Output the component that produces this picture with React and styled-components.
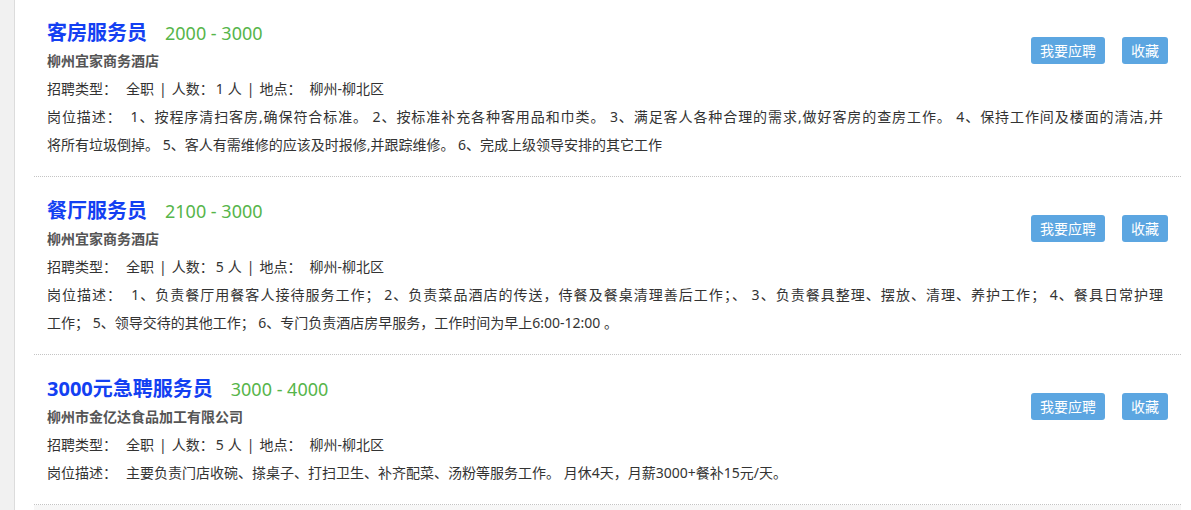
import React from "react";
import styled, { createGlobalStyle } from "styled-components";

const GlobalStyle = createGlobalStyle`
  body {
    margin: 0;
    background: #fff;
    font-family: "Noto Sans", "Noto Sans CJK SC", sans-serif;
    color: #333;
  }
`;

const Page = styled.div`
  display: flex;
  height: 510px;
  overflow: hidden;
`;

const Side = styled.div`
  width: 14px;
  flex-shrink: 0;
  background: #f1f1f1;
  border-right: 1px solid #dcdcdc;
`;

const Main = styled.div`
  flex: 1;
  padding: 0 10px 0 19px;
  margin-top: -1px;
`;

const Item = styled.div`
  padding: 20px 13px 17px;
  border-bottom: 1px dotted #c4c4c4;
`;

const Head = styled.div`
  display: flex;
  justify-content: space-between;
  align-items: flex-start;
`;

const Info = styled.div`
  line-height: 28px;
  font-size: 14px;
`;

const TitleRow = styled.div`
  display: flex;
  align-items: baseline;
`;

const Title = styled.a`
  font-size: 20px;
  font-weight: bold;
  color: #1340f2;
  text-decoration: none;
`;

const Salary = styled.span`
  font-size: 18px;
  color: #56b54a;
  margin-left: 18px;
`;

const Company = styled.div`
  font-weight: bold;
  color: #555;
`;

const Label = styled.span`
  margin-right: 9px;
`;

const Sep = styled.span`
  margin: 0 5px;
`;

const Count = styled.span`
  margin: 0 4px 0 2px;
`;

const Place = styled.span`
  margin-left: 8px;
`;

const Actions = styled.div`
  display: flex;
  gap: 17px;
  margin-top: 18px;
`;

const Button = styled.button`
  height: 27px;
  padding: 0 9px;
  border: none;
  border-radius: 3px;
  background: #5ca6e1;
  color: #fff;
  font-family: inherit;
  font-size: 14px;
  line-height: 27px;
  cursor: pointer;
`;

const Desc = styled.div`
  font-size: 14px;
  line-height: 28px;
  padding-right: 5px;
`;

const Line = styled.span`
  display: block;
  white-space: nowrap;
  text-align: ${(p) => (p.$full ? "justify" : "left")};
  text-align-last: ${(p) => (p.$full ? "justify" : "auto")};
`;

const Footer = styled.div`
  height: 40px;
  background: #f7f7f7;
`;

const jobs = [
  {
    title: "客房服务员",
    salary: "2000 - 3000",
    company: "柳州宜家商务酒店",
    count: 1,
    desc: [
      "1、按程序清扫客房,确保符合标准。 2、按标准补充各种客用品和巾类。 3、满足客人各种合理的需求,做好客房的查房工作。 4、保持工作间及楼面的清洁,并",
      "将所有垃圾倒掉。 5、客人有需维修的应该及时报修,并跟踪维修。 6、完成上级领导安排的其它工作",
    ],
  },
  {
    title: "餐厅服务员",
    salary: "2100 - 3000",
    company: "柳州宜家商务酒店",
    count: 5,
    desc: [
      "1、负责餐厅用餐客人接待服务工作； 2、负责菜品酒店的传送，侍餐及餐桌清理善后工作；、 3、负责餐具整理、摆放、清理、养护工作； 4、餐具日常护理",
      "工作； 5、领导交待的其他工作； 6、专门负责酒店房早服务，工作时间为早上6:00-12:00 。",
    ],
  },
  {
    title: "3000元急聘服务员",
    salary: "3000 - 4000",
    company: "柳州市金亿达食品加工有限公司",
    count: 5,
    desc: ["主要负责门店收碗、搽桌子、打扫卫生、补齐配菜、汤粉等服务工作。 月休4天，月薪3000+餐补15元/天。"],
  },
];

export default function App() {
  return (
    <Page>
      <GlobalStyle />
      <Side />
      <Main>
        {jobs.map((job) => (
          <Item key={job.title}>
            <Head>
              <Info>
                <TitleRow>
                  <Title href="#">{job.title}</Title>
                  <Salary>{job.salary}</Salary>
                </TitleRow>
                <Company>{job.company}</Company>
                <div>
                  <Label>招聘类型：</Label>全职<Sep>|</Sep>人数：<Count>{job.count}</Count>人<Sep>|</Sep>地点：
                  <Place>柳州-柳北区</Place>
                </div>
              </Info>
              <Actions>
                <Button>我要应聘</Button>
                <Button>收藏</Button>
              </Actions>
            </Head>
            <Desc>
              {job.desc.map((line, i) => (
                <Line key={i} $full={i < job.desc.length - 1}>
                  {i === 0 && <Label>岗位描述：</Label>}
                  {line}
                </Line>
              ))}
            </Desc>
          </Item>
        ))}
        <Footer />
      </Main>
    </Page>
  );
}
